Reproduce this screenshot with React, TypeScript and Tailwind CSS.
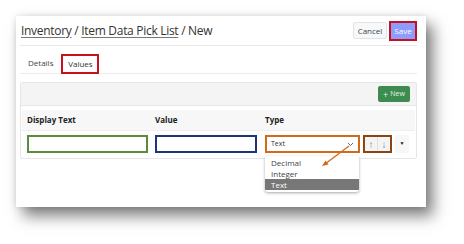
import React from "react";

export default function App() {
  return (
    <div
      className="w-[464px] h-[244px] bg-white pl-[16px] pt-[16px] overflow-hidden"
      style={{ fontFamily: '"Open Sans", "Noto Sans", sans-serif' }}
    >
      <div className="relative w-[410px] h-[191px] bg-white pl-[4px] pr-[9px] shadow-[7px_9px_14px_rgba(0,0,0,0.5),0_0_6px_rgba(0,0,0,0.12)]">
        {/* header */}
        <div className="h-[30px] flex items-center justify-between border-b border-[#e8e8e8]">
          <div className="pl-[1px] text-[12px] text-[#333] tracking-[-0.3px] leading-none">
            <span className="underline underline-offset-2 decoration-[#777]">Inventory</span>
            <span> / </span>
            <span className="underline underline-offset-2 decoration-[#777]">Item Data Pick List</span>
            <span> / New</span>
          </div>
          <div className="flex items-center gap-[2px]">
            <div className="h-[17px] w-[34px] flex items-center justify-center bg-[#f7f8f9] border border-[#e3e3e3] rounded-[2px] text-[8px] text-[#444]">
              Cancel
            </div>
            <div className="h-[20px] w-[28px] flex items-center justify-center bg-[#8e9bff] border-2 border-[#c8101e] text-[8px] text-white">
              Save
            </div>
          </div>
        </div>
        {/* tabs */}
        <div className="h-[28px] flex items-end border-b border-[#ececec]">
          <div className="h-[19px] pl-[8px] pr-[8px] flex items-center text-[8px] text-[#444] mb-[1px]">Details</div>
          <div className="h-[20px] w-[38px] flex items-center justify-center border-2 border-[#c8101e] text-[8px] text-[#333] -mb-[1px] bg-white">
            Values
          </div>
        </div>
        {/* panel */}
        <div className="relative mt-[8px] border border-[#e6e6e6] rounded-[2px] h-[77px]">
          <div className="h-[23px] bg-[#f4f4f4] border-b border-[#e8e8e8] flex items-center justify-end pr-[6px]">
            <div className="h-[16px] w-[32px] rounded-[2px] bg-[#3d8b4f] flex items-center justify-center gap-[2px] text-[7px] text-[#e8f5ea]">
              <span className="text-[9px] leading-none">+</span>
              <span>New</span>
            </div>
          </div>
          <div className="mx-[1px] mt-[4px]">
            <div className="h-[21px] bg-[#f7f7f7] border-b border-[#efefef] flex items-center text-[8px] font-bold text-[#222]">
              <div className="w-[128px] pl-[5px]">Display Text</div>
              <div className="w-[110px] pl-[5px]">Value</div>
              <div className="pl-[5px]">Type</div>
            </div>
            <div className="h-[26px] flex items-center">
              <div className="w-[128px] pl-[5px]">
                <div className="w-[121px] h-[18px] border-2 border-[#5e8a3c] bg-white" />
              </div>
              <div className="w-[110px] pl-[5px]">
                <div className="w-[102px] h-[18px] border-2 border-[#1c3577] bg-white" />
              </div>
              <div className="w-[103px] pl-[5px]">
                <div className="w-[95px] h-[18px] border-2 border-[#d26a1c] bg-white flex items-center justify-between pl-[4px] pr-[4px] text-[7px] text-[#333]">
                  <span>Text</span>
                  <svg width="7" height="5" viewBox="0 0 7 5">
                    <path d="M1 1 L3.5 3.5 L6 1" fill="none" stroke="#555" strokeWidth="0.9" />
                  </svg>
                </div>
              </div>
              <div className="w-[29px] h-[18px] border-2 border-[#8a4512] flex">
                <div className="flex-1 bg-[#f4f4f4] border-r border-[#e0e0e0] flex items-center justify-center text-[10px] leading-none text-[#888]">↑</div>
                <div className="flex-1 bg-[#f4f4f4] flex items-center justify-center text-[10px] leading-none text-[#888]">↓</div>
              </div>
              <div className="ml-[3px] h-[18px] w-[14px] bg-[#f7f7f7] flex items-center justify-center text-[5px] text-[#111]">▼</div>
            </div>
          </div>
        </div>
        {/* dropdown list */}
        <div className="absolute left-[249px] top-[140px] w-[94px] bg-white rounded-[3px] shadow-[0_1px_3px_rgba(0,0,0,0.35)] text-[8px] text-[#444] pt-[1px] pb-[2px] overflow-hidden">
          <div className="h-[11px] flex items-center pl-[6px]">Decimal</div>
          <div className="h-[11px] flex items-center pl-[6px]">Integer</div>
          <div className="h-[11px] flex items-center pl-[6px] bg-[#777] text-white">Text</div>
        </div>
        {/* annotation arrow */}
        <svg className="absolute left-[300px] top-[125px]" width="40" height="30" viewBox="0 0 40 30">
          <line x1="33" y1="5" x2="9" y2="23" stroke="#d26a1c" strokeWidth="1.3" />
          <path d="M6 25 L9.5 19.5 L12.5 23.5 Z" fill="#d26a1c" />
        </svg>
      </div>
    </div>
  );
}
